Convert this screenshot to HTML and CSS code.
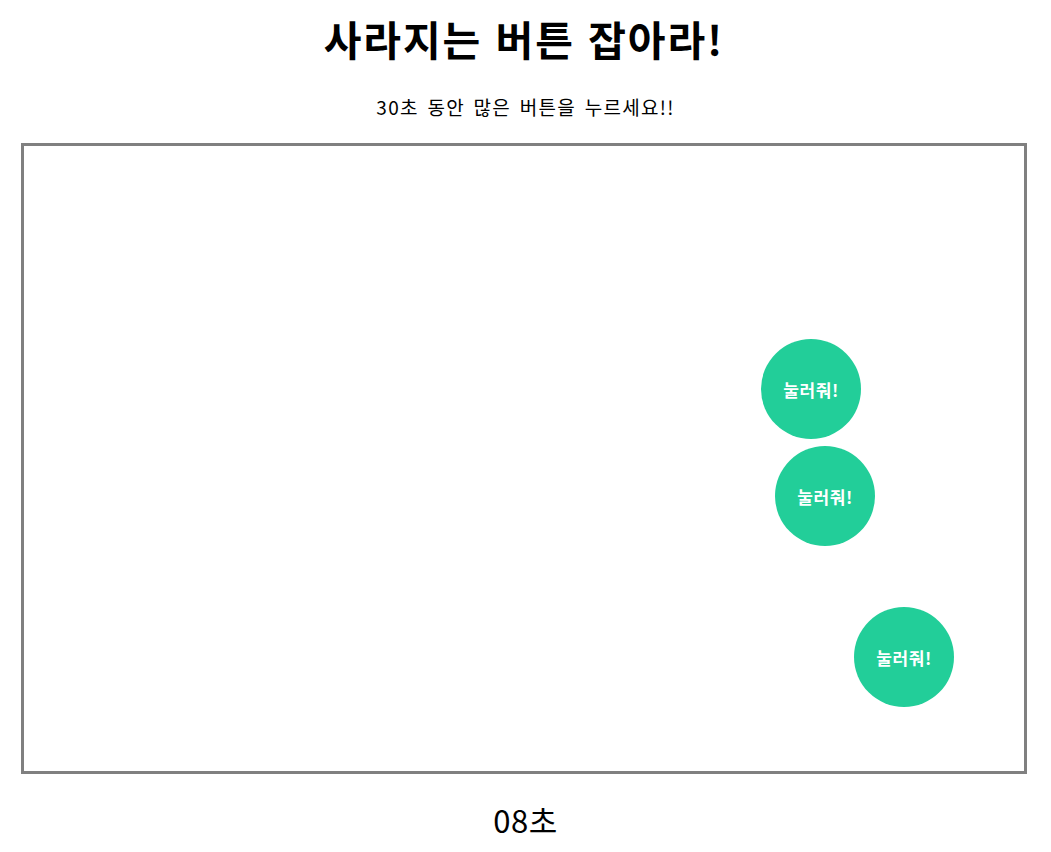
FILE: index.html
```html
<!DOCTYPE html>
<html lang="ko">
<head>
<meta charset="utf-8">
<title>사라지는 버튼 잡아라!</title>
<link rel="stylesheet" href="styles.css">
</head>
<body>
<main class="page">
  <h1 class="title">사라지는 버튼 잡아라!</h1>
  <p class="subtitle">30초 동안 많은 버튼을 누르세요!!</p>
  <div class="board">
    <button class="target" style="left:737px;top:193px">눌러줘!</button>
    <button class="target" style="left:751px;top:300px">눌러줘!</button>
    <button class="target" style="left:830px;top:461px">눌러줘!</button>
  </div>
  <p class="timer">08초</p>
</main>
</body>
</html>
```
FILE: styles.css
```css
* { box-sizing: border-box; }
html, body { margin: 0; padding: 0; background: #fff; }
body {
  font-family: "Noto Sans CJK KR", "Noto Sans", sans-serif;
  color: #000;
}
.page {
  display: flex;
  flex-direction: column;
  align-items: center;
}
.title {
  margin: 14px 0 0 -3px;
  font-size: 41px;
  line-height: 48px;
  font-weight: 700;
  letter-spacing: 1.9px;
}
.subtitle {
  margin: 33px 0 0;
  font-size: 19px;
  line-height: 24px;
  letter-spacing: 1.3px;
  word-spacing: 2px;
}
.board {
  position: relative;
  align-self: flex-start;
  margin: 24px 0 0 21px;
  width: 1006px;
  height: 631px;
  border: 3px solid #808080;
}
.target {
  position: absolute;
  width: 100px;
  height: 100px;
  border: none;
  border-radius: 50%;
  background: #22ce99;
  color: #fff;
  font-family: "Noto Sans CJK KR", sans-serif;
  font-size: 17px;
  font-weight: 700;
  letter-spacing: 0.6px;
  padding: 0;
  cursor: pointer;
}
.timer {
  margin: 28px 0 0;
  font-size: 31px;
  line-height: 36px;
  letter-spacing: 0.5px;
}
```
